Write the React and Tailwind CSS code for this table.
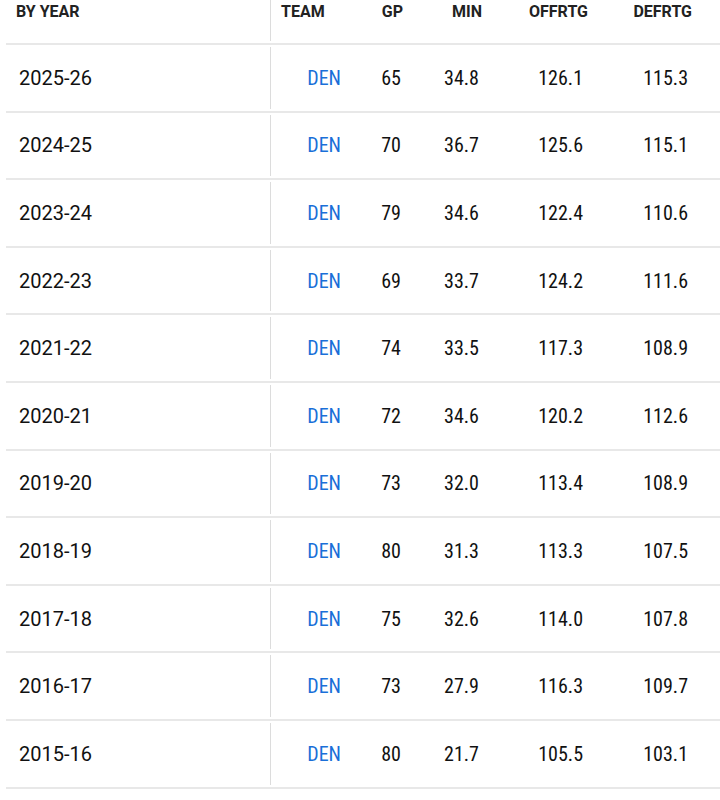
const rows = [
    ['2025-26', 'DEN', '65', '34.8', '126.1', '115.3'],
    ['2024-25', 'DEN', '70', '36.7', '125.6', '115.1'],
    ['2023-24', 'DEN', '79', '34.6', '122.4', '110.6'],
    ['2022-23', 'DEN', '69', '33.7', '124.2', '111.6'],
    ['2021-22', 'DEN', '74', '33.5', '117.3', '108.9'],
    ['2020-21', 'DEN', '72', '34.6', '120.2', '112.6'],
    ['2019-20', 'DEN', '73', '32.0', '113.4', '108.9'],
    ['2018-19', 'DEN', '80', '31.3', '113.3', '107.5'],
    ['2017-18', 'DEN', '75', '32.6', '114.0', '107.8'],
    ['2016-17', 'DEN', '73', '27.9', '116.3', '109.7'],
    ['2015-16', 'DEN', '80', '21.7', '105.5', '103.1'],
];

const cols = 'grid grid-cols-[271px_71px_61px_79px_106px_104px_1fr]';
const num = "font-['Roboto',sans-serif] font-stretch-condensed text-[20px] text-[#111]";

export default function App() {
    return (
        <div className="w-[720px] h-[800px] bg-white font-['Roboto',sans-serif] overflow-hidden">
            <div className={`${cols} h-[43px] text-[16px] font-bold text-[#222] leading-[19px]`}>
                <div className="pl-[16px] pt-[2px] border-r border-[#dcdcdc] mb-[2px]">BY YEAR</div>
                <div className="pl-[10px] pt-[2px]">TEAM</div>
                <div className="text-right pt-[2px]">GP</div>
                <div className="text-right pt-[2px]">MIN</div>
                <div className="text-right pt-[2px]">OFFRTG</div>
                <div className="text-right pt-[2px]">DEFRTG</div>
                <div></div>
            </div>
            <div className="ml-[6px] h-[2px] bg-[#e8e8e8]"></div>
            {rows.map((r) => (
                <div key={r[0]}>
                    <div className={`${cols} h-[65.6px] items-center`}>
                        <div className="self-stretch my-[2px] flex items-center pl-[19px] border-r border-[#dcdcdc] text-[20px] text-[#111]">
                            {r[0]}
                        </div>
                        <div className={`${num} text-right pr-[1px] !text-[#1a6fd8]`}>{r[1]}</div>
                        <div className={`${num} text-right pr-[2px]`}>{r[2]}</div>
                        <div className={`${num} text-right pr-[3px]`}>{r[3]}</div>
                        <div className={`${num} text-right pr-[5px]`}>{r[4]}</div>
                        <div className={`${num} text-right pr-[4px]`}>{r[5]}</div>
                        <div></div>
                    </div>
                    <div className="ml-[6px] h-[2px] bg-[#e8e8e8]"></div>
                </div>
            ))}
        </div>
    );
}
